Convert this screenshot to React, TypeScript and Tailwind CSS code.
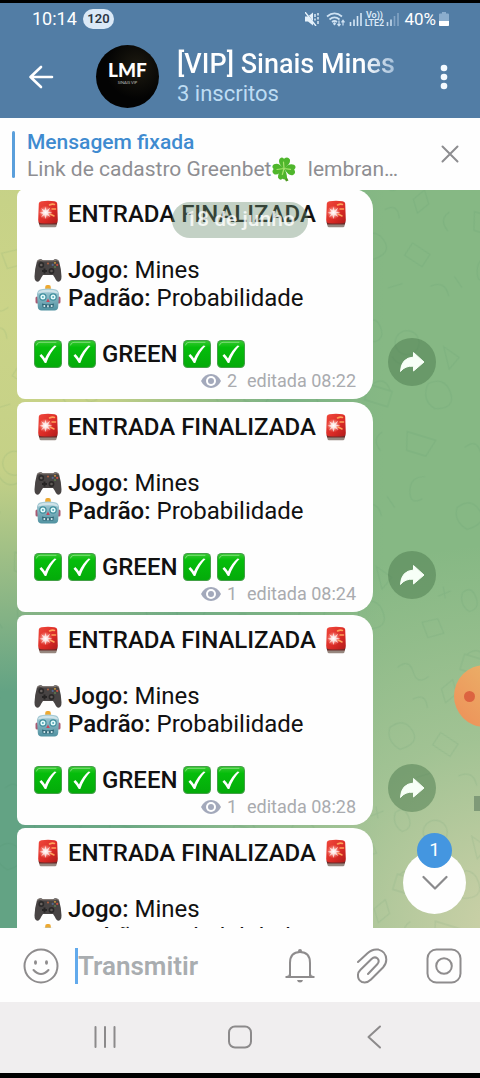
import type { ReactNode } from 'react';

const ICON = 'block shrink-0';

function Siren() {
  return (
    <svg viewBox="0 0 28 28" className="inline-block h-7 w-7 align-[-6px]" role="img" aria-label="Sirene">
      <defs>
        <linearGradient id="sirenRed" x1="0" y1="0" x2="1" y2="1">
          <stop offset="0" stopColor="#f0483c" />
          <stop offset="0.6" stopColor="#d92a25" />
          <stop offset="1" stopColor="#b01c1c" />
        </linearGradient>
        <radialGradient id="sirenGlow">
          <stop offset="0" stopColor="#fff" />
          <stop offset="0.4" stopColor="#ffc4ba" stopOpacity="0.75" />
          <stop offset="1" stopColor="#ff8a7a" stopOpacity="0" />
        </radialGradient>
      </defs>
      <path d="M4.500 21h19l-1 5q-.3 1.200-1.500 1.200H7q-1.200 0-1.500-1.200z" fill="#96877f" />
      <path d="M4.600 22h18.800l-.6 2.400H5.200z" fill="#6b2a28" />
      <path d="M4.800 3.500Q5 1.500 7.500 1.200 14 .5 20.500 1.200q2.500.3 2.700 2.300L23.800 20q0 3-3 3.200Q14 24 7.200 23.200q-3-.2-3-3.200z" fill="url(#sirenRed)" />
      <path d="M15.500 5q3-1.500 5-.5M18 9h3.500M16 14l4 2" stroke="#ffa25a" strokeWidth="1.600" strokeLinecap="round" />
      <circle cx="11.500" cy="12.500" r="7" fill="url(#sirenGlow)" />
      <path d="M11.500 6.500l1 4 3.800-3-2.300 4.300 4.500.4-4.500 1.300 2.500 3.500-3.800-2-1.200 4-1.200-4L7 17.500l2.200-3.500L5.500 12.700l3.900-1L7.200 8.200l3.400 2z" fill="#fff" fillOpacity="0.7" />
    </svg>
  );
}

function Gamepad() {
  return (
    <svg viewBox="0 0 28 28" className="inline-block h-7 w-7 align-[-6px]" role="img" aria-label="Controle">
      <path d="M7 3.200Q4 3 3 5 .7 13 .5 20.500q0 5 3 5.200 2 0 3.700-4L9 19h10l1.800 2.700q1.700 4 3.700 4 3-.2 3-5.200Q27.300 13 25 5q-1-2-4-1.800-1 .2-1.600 1H8.600q-.6-.8-1.600-1z" fill="#484444" />
      <path d="M3.200 5.500Q5 3.200 8.400 4.800h11.200q3.400-1.600 5.200.7" stroke="#857b75" strokeWidth="1" fill="none" />
      <circle cx="7.300" cy="9" r="2.900" fill="#2c2a2a" />
      <circle cx="7.300" cy="9" r="1.300" fill="#6b6461" />
      <circle cx="17.500" cy="15" r="2.900" fill="#2a2828" />
      <circle cx="17.500" cy="15" r="1.300" fill="#605b58" />
      <path d="M10.500 12.500v5M8 15h5" stroke="#262424" strokeWidth="2" />
      <circle cx="21" cy="6.800" r="1.100" fill="#b98b3c" />
      <circle cx="18.700" cy="8.900" r="1.100" fill="#55678a" />
      <circle cx="23.200" cy="8.900" r="1.100" fill="#c9503f" />
      <circle cx="21" cy="11" r="1.100" fill="#5b7a4d" />
      <circle cx="14" cy="7.500" r="1" fill="#b5603f" />
    </svg>
  );
}

function Robot() {
  return (
    <svg viewBox="0 0 28 28" className="inline-block h-7 w-7 align-[-6px]" role="img" aria-label="Robô">
      <defs>
        <linearGradient id="robotFace" x1="0" y1="0" x2="0" y2="1">
          <stop offset="0" stopColor="#a9cdd8" />
          <stop offset="1" stopColor="#4f91a0" />
        </linearGradient>
      </defs>
      <rect x="1.500" y="12.500" width="3.500" height="7" rx="1.500" fill="#a85a72" />
      <rect x="23" y="12.500" width="3.500" height="7" rx="1.500" fill="#a85a72" />
      <rect x="11.200" y="1" width="5.600" height="5.500" rx="2" fill="#eda932" />
      <path d="M3 10q.5-4 4-4.800Q14 4 21 5.200q3.500.8 4 4.800l-.8 13q-.3 3.400-3.700 3.600h-13Q4.100 26.400 3.800 23z" fill="url(#robotFace)" />
      <path d="M3.800 9.500Q5 6.600 9 6.100q5-.6 10 0 4 .5 5.200 3.400-10.200-2.400-20.400 0z" fill="#cfe3e9" />
      <circle cx="8.900" cy="13" r="3.700" fill="#3f8d9c" />
      <circle cx="19.100" cy="13" r="3.700" fill="#3f8d9c" />
      <circle cx="8.900" cy="13" r="2.500" fill="#e4fbfb" />
      <circle cx="19.100" cy="13" r="2.500" fill="#e4fbfb" />
      <circle cx="8.900" cy="13" r="1" fill="#57a9b9" />
      <circle cx="19.100" cy="13" r="1" fill="#57a9b9" />
      <path d="M14 14.500l1.800 3.500h-3.600z" fill="#c94458" />
      <path d="M8 19.500q6 2 12 0l-.7 4H8.700z" fill="#2f6575" />
      <path d="M9.500 21h1.700v2H9.500zM13.100 21.300h1.700v2h-1.700zM16.800 21h1.700v2h-1.700z" fill="#cfe6ea" />
    </svg>
  );
}

function Check() {
  return (
    <svg viewBox="0 0 28 28" className="inline-block h-7 w-7 align-[-6px]" role="img" aria-label="Certo">
      <defs>
        <linearGradient id="checkGreen" x1="0" y1="0" x2="0" y2="1">
          <stop offset="0" stopColor="#35c92f" />
          <stop offset="0.25" stopColor="#05bd0b" />
          <stop offset="1" stopColor="#04ab0a" />
        </linearGradient>
      </defs>
      <rect width="28" height="28" rx="4.500" fill="#43a047" />
      <rect x="1" y="1" width="26" height="26" rx="4" fill="url(#checkGreen)" />
      <path d="M2.500 5Q3 2.300 6 2.300h16" stroke="#7ddc78" strokeWidth="1" fill="none" strokeLinecap="round" />
      <path d="M5.500 15.800l1.800-1.700q2 1.500 3.700 4.500Q14.500 10.500 20.500 5.500l2 .6Q16 12.500 12.300 23h-1.500Q8.500 18.800 5.500 15.800z" fill="#fff" />
    </svg>
  );
}

function Clover() {
  return (
    <svg viewBox="0 0 26 26" className="inline-block h-[26px] w-[26px] align-[-6px]" role="img" aria-label="Trevo">
      <path d="M12.500 12q1.500 7 5 12.500l-2.500 1Q12 20 12 13z" fill="#4f9a22" />
      <g fill="#4fb62c">
        <path d="M13 12.500Q6.500 7.500 8.500 3q2-3 4.500-.2 3.500-3 5.800.4 1.500 4.500-5.800 9.300z" />
        <path d="M13 12.500Q18.500 6.500 23 8.800q3 2.200.2 4.700 2.200 3.500-1.200 5.500-4.500 1.300-9-6.500z" />
        <path d="M13 12.500Q7.500 6 3 8.300 0 10.500 2.600 13q-2.600 3 .6 5.300 4.500 1.500 9.800-5.800z" />
        <path d="M13 12.500q-6.500 4-6 9 1.500 3.500 4.500 1.300 3 1.700 4.200-1 .8-4.300-2.700-9.300z" />
      </g>
      <path d="M13 12.500L12.500 6M13 12.500l6.500.8M13 12.500L6 13.500M13 12.500l-1.700 6" stroke="#a7e36d" strokeWidth="1.200" strokeLinecap="round" />
    </svg>
  );
}

function StatusBar() {
  return (
    <div className="flex h-8 items-center pr-[31px] pl-8 text-white">
      <span className="w-[51px] text-[18px] leading-5">10:14</span>
      <span className="flex h-5 w-[31px] items-center justify-center rounded-full bg-[#dbe9f7] text-[13px] font-semibold text-[#2c3744]">120</span>
      <div className="ml-auto flex items-center gap-[3px]">
        <svg viewBox="0 0 14 14" className={`${ICON} h-3.5 w-3.5`} aria-label="Mudo">
          <path d="M0 4.500h3L8 .5v13L3 9.500H0z" fill="#e5f1fb" />
          <path d="M1 0l10 14" stroke="#527da5" strokeWidth="1" />
          <path d="M0 0l11 14M10 2v3M10 6.500v2M13 1v2.500M13 5v2.500M13 9v3" stroke="#e5f1fb" strokeWidth="1.400" />
        </svg>
        <svg viewBox="0 0 20 16" className={`${ICON} ml-1 h-4 w-5`} aria-label="Wi-Fi" fill="none" stroke="#cfe2f3" strokeWidth="1.700">
          <path d="M1 5.500Q8.500-.8 16 5.500M3.500 8.500q5-4.300 10 0M6 11q2.500-2 5 0" />
          <path d="M8.500 11l1.600 1.700-1.600 1.700-1.600-1.700z" fill="#cfe2f3" stroke="none" />
          <path d="M13 9.500v5M11.500 13l1.500 1.800 1.500-1.800M17 14.500v-5M15.500 11.300L17 9.300l1.500 2" strokeWidth="1.200" />
        </svg>
        <svg viewBox="0 0 13 14" className={`${ICON} h-3.5 w-[13px]`} aria-label="Sinal 1" stroke="#d5e6f5" strokeWidth="1.600">
          <path d="M1.500 14v-4M5 14V7.500M8.500 14V4M12 14V1" />
        </svg>
        <span className="flex w-[18px] flex-col items-center text-[9px] leading-[8px] font-semibold text-[#dceaf7]"><span>Vo))</span><span>LTE2</span></span>
        <svg viewBox="0 0 13 14" className={`${ICON} h-3.5 w-[13px]`} aria-label="Sinal 2" stroke="#84a5c5" strokeWidth="1.600">
          <path d="M1.500 14v-4M5 14V7.500" stroke="#c5daed" /><path d="M8.500 14V4M12 14V1" />
        </svg>
        <span className="ml-0.5 text-[17px] leading-5">40%</span>
        <svg viewBox="0 0 10 14" className={`${ICON} h-3.5 w-2.5`} aria-label="Bateria">
          <path d="M3 0h4v1.500h2q1 0 1 1V13q0 1-1 1H1q-1 0-1-1V2.500q0-1 1-1h2z" fill="#8badcd" />
          <path d="M0 9h10v4q0 1-1 1H1q-1 0-1-1z" fill="#fff" />
        </svg>
      </div>
    </div>
  );
}

function Header() {
  return (
    <header className="shrink-0 bg-[#527da5]">
      <StatusBar />
      <div className="flex h-[83px] items-center pr-8 pl-7">
        <button type="button" aria-label="Voltar" className="flex w-[68px] items-center">
          <svg viewBox="0 0 28 26" className={`${ICON} h-[26px] w-7`} fill="none" stroke="#fff" strokeWidth="2.600" strokeLinecap="round" strokeLinejoin="round">
            <path d="M24 13H2.500M13 3L2.500 13 13 23" />
          </svg>
        </button>
        <div className="flex h-[63px] w-[63px] shrink-0 flex-col items-center justify-center rounded-full bg-[radial-gradient(circle_at_65%_35%,#1d1a10,#030303_55%)] pb-2 font-[Lato,sans-serif] text-white">
          <span className="text-[19px] leading-5 font-black">LMF</span>
          <span className="text-[4px] leading-[5px] text-[#bdbdbd]">SINAIS VIP</span>
        </div>
        <div className="ml-[18px] flex min-w-0 flex-1 flex-col pt-1">
          <h1 className="self-start bg-[linear-gradient(90deg,#fff_85%,#a4bfd9)] bg-clip-text text-[27px] leading-[30px] font-medium whitespace-nowrap text-transparent">[VIP] Sinais Mines</h1>
          <p className="text-[22px] leading-[30px] text-[#bddcf3]">3 inscritos</p>
        </div>
        <button type="button" aria-label="Mais opções" className="flex w-2 justify-center">
          <svg viewBox="0 0 8 26" className={`${ICON} h-[26px] w-2`} fill="#f4faff">
            <circle cx="4" cy="4" r="3.300" /><circle cx="4" cy="13" r="3.300" /><circle cx="4" cy="22" r="3.300" />
          </svg>
        </button>
      </div>
    </header>
  );
}

function Pinned() {
  return (
    <section className="flex h-[72px] shrink-0 items-center bg-[#fefefe] pr-[21px] pl-3">
      <span className="h-[47px] w-[3px] shrink-0 rounded-full bg-[#5a9fdb]" />
      <div className="ml-3 min-w-0 flex-1 pt-1">
        <h2 className="text-[21px] leading-[27px] font-medium text-[#3f8bd0]">Mensagem fixada</h2>
        <p className="text-[21px] leading-[27px] whitespace-nowrap text-[#8e8e92]">Link de cadastro Greenbet<Clover />&nbsp; lembran…</p>
      </div>
      <button type="button" aria-label="Fechar mensagem fixada">
        <svg viewBox="0 0 18 18" className={`${ICON} h-[18px] w-[18px]`} stroke="#8d8d90" strokeWidth="2" strokeLinecap="round">
          <path d="M1.500 1.500l15 15M16.500 1.500l-15 15" />
        </svg>
      </button>
    </section>
  );
}

function Line({ children }: { children?: ReactNode }) {
  return <p className="h-7 whitespace-nowrap">{children}</p>;
}

function Message({ views, time }: { views: number; time: string }) {
  return (
    <li className="flex shrink-0 items-end gap-[15px]">
      <article className="min-w-0 flex-1 rounded-l-[8px] rounded-r-[20px] bg-[#fefefe] pt-[11px] pr-[17px] pb-[9px] pl-[17px] text-[24px] leading-7 text-[#111]">
        <Line><Siren /> <b className="font-medium">ENTRADA FINALIZADA</b> <Siren /></Line>
        <Line />
        <Line><Gamepad /> <b className="font-medium">Jogo:</b> Mines</Line>
        <Line><Robot /> <b className="font-medium">Padrão:</b> Probabilidade</Line>
        <Line />
        <Line><Check /> <Check /> <b className="font-medium">GREEN</b> <Check /> <Check /></Line>
        <footer className="mt-1 flex h-[18px] items-center justify-end text-[18px] leading-[18px] text-[#a9abaf]">
          <svg viewBox="0 0 20 16" className={`${ICON} mr-1.5 h-4 w-5`} aria-label="Visualizações">
            <path d="M0 8Q3.500 1 10 1t10 7q-3.500 7-10 7T0 8z" fill="#a3a9bb" />
            <circle cx="10" cy="8" r="5" fill="#fff" />
            <circle cx="10" cy="8" r="3" fill="#a3a9bb" />
          </svg>
          <span className="mr-2.5">{views}</span>
          <span>editada {time}</span>
        </footer>
      </article>
      <button type="button" aria-label="Encaminhar" className="mb-[13px] flex h-12 w-12 shrink-0 items-center justify-center rounded-full bg-[#4b7a4e]/50">
        <svg viewBox="0 0 26 22" className={`${ICON} h-[22px] w-[26px]`} fill="#f7fff7" stroke="#f7fff7" strokeLinejoin="round">
          <path d="M14.500 1.500L25 11l-10.500 9v-4.800Q6 14.500 1.500 20.500 2 7 14.500 6z" />
        </svg>
      </button>
    </li>
  );
}

const MESSAGES = [
  { views: 2, time: '08:22' },
  { views: 1, time: '08:24' },
  { views: 1, time: '08:28' },
  { views: 1, time: '08:31' },
];

function Doodles() {
  return (
    <svg className="absolute inset-0 h-full w-full" aria-hidden="true">
      <defs>
        <pattern id="doodle" width="170" height="230" patternUnits="userSpaceOnUse" patternTransform="rotate(17)">
          <g fill="none" stroke="#3f7d55" strokeOpacity="0.1" strokeWidth="1.300" strokeLinecap="round">
            <circle cx="94" cy="27" r="12" />
            <path d="M84 45q12 10 22-4M50 20q6-10 14 0t-2 16q-12-4-12-16zM20 60l14-8 10 12-14 9zM70 78h24v16H70zM72 78q10-14 20 0M10 110q8-12 16 0t16 0M58 118l8-12 8 12-8 12zM96 120q-8 10 4 18M30 20l5 10M28 30l10-8M34 136q10-10 16 4" />
            <path d="M126 60q14-12 24 2t-10 20q-16-4-14-22zM130 20l18 6-6 14zM120 112h30l-5 18h-20zM150 150q-14 4-10 18t14 4M20 170q10-14 22-4t-6 22q-16-4-16-18zM70 160l20 6-4 14-20-6zM100 196q12-10 20 4M60 210l12-8M120 180l10 8" />
          </g>
        </pattern>
      </defs>
      <rect width="100%" height="100%" fill="url(#doodle)" />
    </svg>
  );
}

function Chat() {
  return (
    <main className="relative min-h-0 flex-1 overflow-hidden bg-[radial-gradient(ellipse_60%_52%_at_0%_16%,#cbd488,#c5d187_42%,#c5d18700),radial-gradient(ellipse_80%_52%_at_105%_100%,#cdd1a8,#bccda380_50%,#b0c9a000),linear-gradient(90deg,#63a384_5%,#86b884_80%)]">
      <Doodles />
      <ul className="relative -mt-px flex flex-col gap-[3px] pr-11 pl-[17px]">
        {MESSAGES.map((m) => <Message key={m.time} {...m} />)}
      </ul>
      <div className="absolute inset-x-0 top-3 flex justify-center">
        <span className="flex h-9 items-center rounded-full bg-[#6b8f70]/40 px-[13px] text-[21px] font-medium text-white/80">18 de junho</span>
      </div>
      <div className="absolute top-[475px] -right-9 flex h-[62px] w-[62px] items-center rounded-full bg-[linear-gradient(45deg,#ee8f58,#e9b96c)] pl-2.5">
        <span className="h-[11px] w-[11px] rounded-full bg-[#dc6340]" />
      </div>
      <div className="absolute top-[606px] right-0 h-[15px] w-1.5 bg-[#7f9a78]" />
      <div className="absolute right-[14px] bottom-[14px] flex flex-col items-center">
        <span className="z-10 -mb-[17px] flex h-[35px] w-[35px] items-center justify-center rounded-full bg-[#4496e0] text-[19px] text-white">1</span>
        <button type="button" aria-label="Ir para o fim" className="flex h-[63px] w-[63px] items-center justify-center rounded-full bg-[#fefefe]">
          <svg viewBox="0 0 26 16" className={`${ICON} h-4 w-[26px]`} fill="none" stroke="#8a8a8c" strokeWidth="2.200" strokeLinecap="round" strokeLinejoin="round">
            <path d="M1.500 2L13 13.500 24.500 2" />
          </svg>
        </button>
      </div>
    </main>
  );
}

function Composer() {
  const stroke = { fill: 'none', stroke: '#8e8c8d', strokeWidth: 2, strokeLinecap: 'round', strokeLinejoin: 'round' } as const;
  return (
    <form className="flex h-[74px] shrink-0 items-center bg-[#fefefe] pt-0.5 pr-[18px] pl-[23px]">
      <button type="button" aria-label="Emojis">
        <svg viewBox="0 0 36 36" className={`${ICON} h-9 w-9`} {...stroke}>
          <circle cx="18" cy="18" r="16.500" />
          <path d="M10.500 22q7.500 8 15 0" />
          <ellipse cx="12.500" cy="14.500" rx="1.500" ry="2.200" fill="#8e8c8d" stroke="none" />
          <ellipse cx="23.500" cy="14.500" rx="1.500" ry="2.200" fill="#8e8c8d" stroke="none" />
        </svg>
      </button>
      <span className="ml-4 h-9 w-[3px] shrink-0 bg-[#62aaec]" />
      <input aria-label="Mensagem" placeholder="Transmitir" className="h-10 min-w-0 flex-1 bg-transparent text-[26px] font-semibold text-[#222] outline-none placeholder:text-[#a9adb0]" />
      <div className="flex items-center gap-9">
        <button type="button" aria-label="Notificações">
          <svg viewBox="0 0 36 36" className={`${ICON} h-9 w-9`} {...stroke}>
            <path d="M4.500 29h27M8 29V15Q8 4 18 4t10 11v14" />
            <path d="M4.500 29q3.500 0 3.500-3M31.500 29q-3.500 0-3.500-3" />
            <circle cx="18" cy="2.900" r="2" fill="#8e8c8d" stroke="none" />
            <path d="M15 32h6q-.5 2.500-3 2.500T15 32z" fill="#8e8c8d" stroke="none" />
          </svg>
        </button>
        <button type="button" aria-label="Anexar">
          <svg viewBox="0 0 36 36" className={`${ICON} h-9 w-9`} {...stroke}>
            <path d="M4 14L13.500 5.200Q18.500.5 24.500 1.600 32 3.500 32.300 11.500q0 4.500-3.300 8L17 31.500q-4 4-9 2.500-4.500-2-4-7.500.3-2.500 2.500-4.700L17.500 11q3-2.800 5.800-.8 2.700 2.500.2 5.800L14 26" />
          </svg>
        </button>
        <button type="button" aria-label="Câmera">
          <svg viewBox="0 0 36 36" className={`${ICON} h-9 w-9`} {...stroke}>
            <rect x="1.500" y="1.500" width="33" height="33" rx="9" />
            <circle cx="18" cy="18" r="7.800" />
          </svg>
        </button>
      </div>
    </form>
  );
}

function NavBar() {
  const stroke = { fill: 'none', stroke: '#8c8a8b', strokeWidth: 2, strokeLinecap: 'round', strokeLinejoin: 'round' } as const;
  return (
    <nav className="flex h-[71px] shrink-0 items-center justify-between bg-[#f0eeef] px-[92px] pb-0.5">
      <button type="button" aria-label="Recentes">
        <svg viewBox="0 0 26 24" className={`${ICON} h-6 w-[26px]`} {...stroke}><path d="M3.500 2v20M13 2v20M22.500 2v20" /></svg>
      </button>
      <button type="button" aria-label="Início">
        <svg viewBox="0 0 26 24" className={`${ICON} h-6 w-[26px]`} {...stroke}><rect x="2" y="1.500" width="22" height="21" rx="6" /></svg>
      </button>
      <button type="button" aria-label="Voltar ao anterior">
        <svg viewBox="0 0 26 24" className={`${ICON} h-6 w-[26px]`} {...stroke}><path d="M18 1.500L6.500 12 18 22.500" /></svg>
      </button>
    </nav>
  );
}

export default function App() {
  return (
    <div className="flex h-screen flex-col overflow-hidden border-t-[3px] border-b-[5px] border-black bg-black font-[Roboto,sans-serif]">
      <Header />
      <Pinned />
      <Chat />
      <Composer />
      <NavBar />
    </div>
  );
}
